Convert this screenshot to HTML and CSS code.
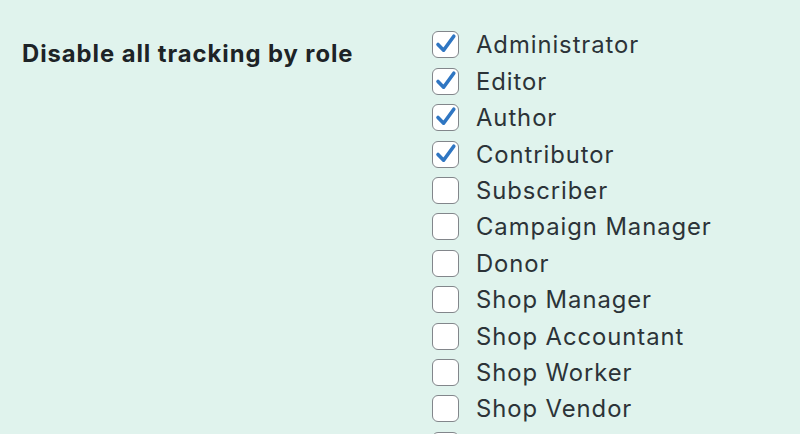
FILE: index.html
```html
<!DOCTYPE html>
<html>
<head>
<meta charset="utf-8">
<link rel="stylesheet" href="styles.css">
</head>
<body>
<div class="row">
  <div class="label">Disable all tracking by role</div>
  <ul class="roles">
    <li><span class="box checked"><svg viewBox="0 0 25 25"><path d="M5 12.5 L10.6 18.2 L20.8 4.2" /></svg></span>Administrator</li>
    <li><span class="box checked"><svg viewBox="0 0 25 25"><path d="M5 12.5 L10.6 18.2 L20.8 4.2" /></svg></span>Editor</li>
    <li><span class="box checked"><svg viewBox="0 0 25 25"><path d="M5 12.5 L10.6 18.2 L20.8 4.2" /></svg></span>Author</li>
    <li><span class="box checked"><svg viewBox="0 0 25 25"><path d="M5 12.5 L10.6 18.2 L20.8 4.2" /></svg></span>Contributor</li>
    <li><span class="box"></span>Subscriber</li>
    <li><span class="box"></span>Campaign Manager</li>
    <li><span class="box"></span>Donor</li>
    <li><span class="box"></span>Shop Manager</li>
    <li><span class="box"></span>Shop Accountant</li>
    <li><span class="box"></span>Shop Worker</li>
    <li><span class="box"></span>Shop Vendor</li>
    <li><span class="box"></span>Shop Customer</li>
  </ul>
</div>
</body>
</html>
```
FILE: styles.css
```css
html, body {
  margin: 0;
  padding: 0;
  background: #e0f3ed;
  overflow: hidden;
  height: 434px;
}
.row {
  display: flex;
  align-items: flex-start;
}
.label {
  width: 410px;
  padding: 39px 0 0 22px;
  font-family: Inter, "Liberation Sans", sans-serif;
  font-weight: 650;
  font-size: 23.8px;
  letter-spacing: 0.95px;
  color: #1d2327;
  line-height: 30px;
}
.roles {
  list-style: none;
  margin: 0;
  padding: 26.8px 0 0 0;
}
.roles li {
  display: flex;
  align-items: center;
  height: 36.4px;
  font-family: Inter, "Liberation Sans", sans-serif;
  font-size: 23.8px;
  letter-spacing: 0.95px;
  color: #2c3338;
}
.box {
  width: 25px;
  height: 25px;
  border: 1.5px solid #82868b;
  border-radius: 6px;
  background: #fff;
  margin-right: 17px;
  display: flex;
  align-items: center;
  justify-content: center;
  flex-shrink: 0;
}
.box svg {
  width: 25px;
  height: 25px;
}
.box svg path {
  fill: none;
  stroke: #2f76c2;
  stroke-width: 3.6;
  stroke-linecap: round;
  stroke-linejoin: round;
}
```
